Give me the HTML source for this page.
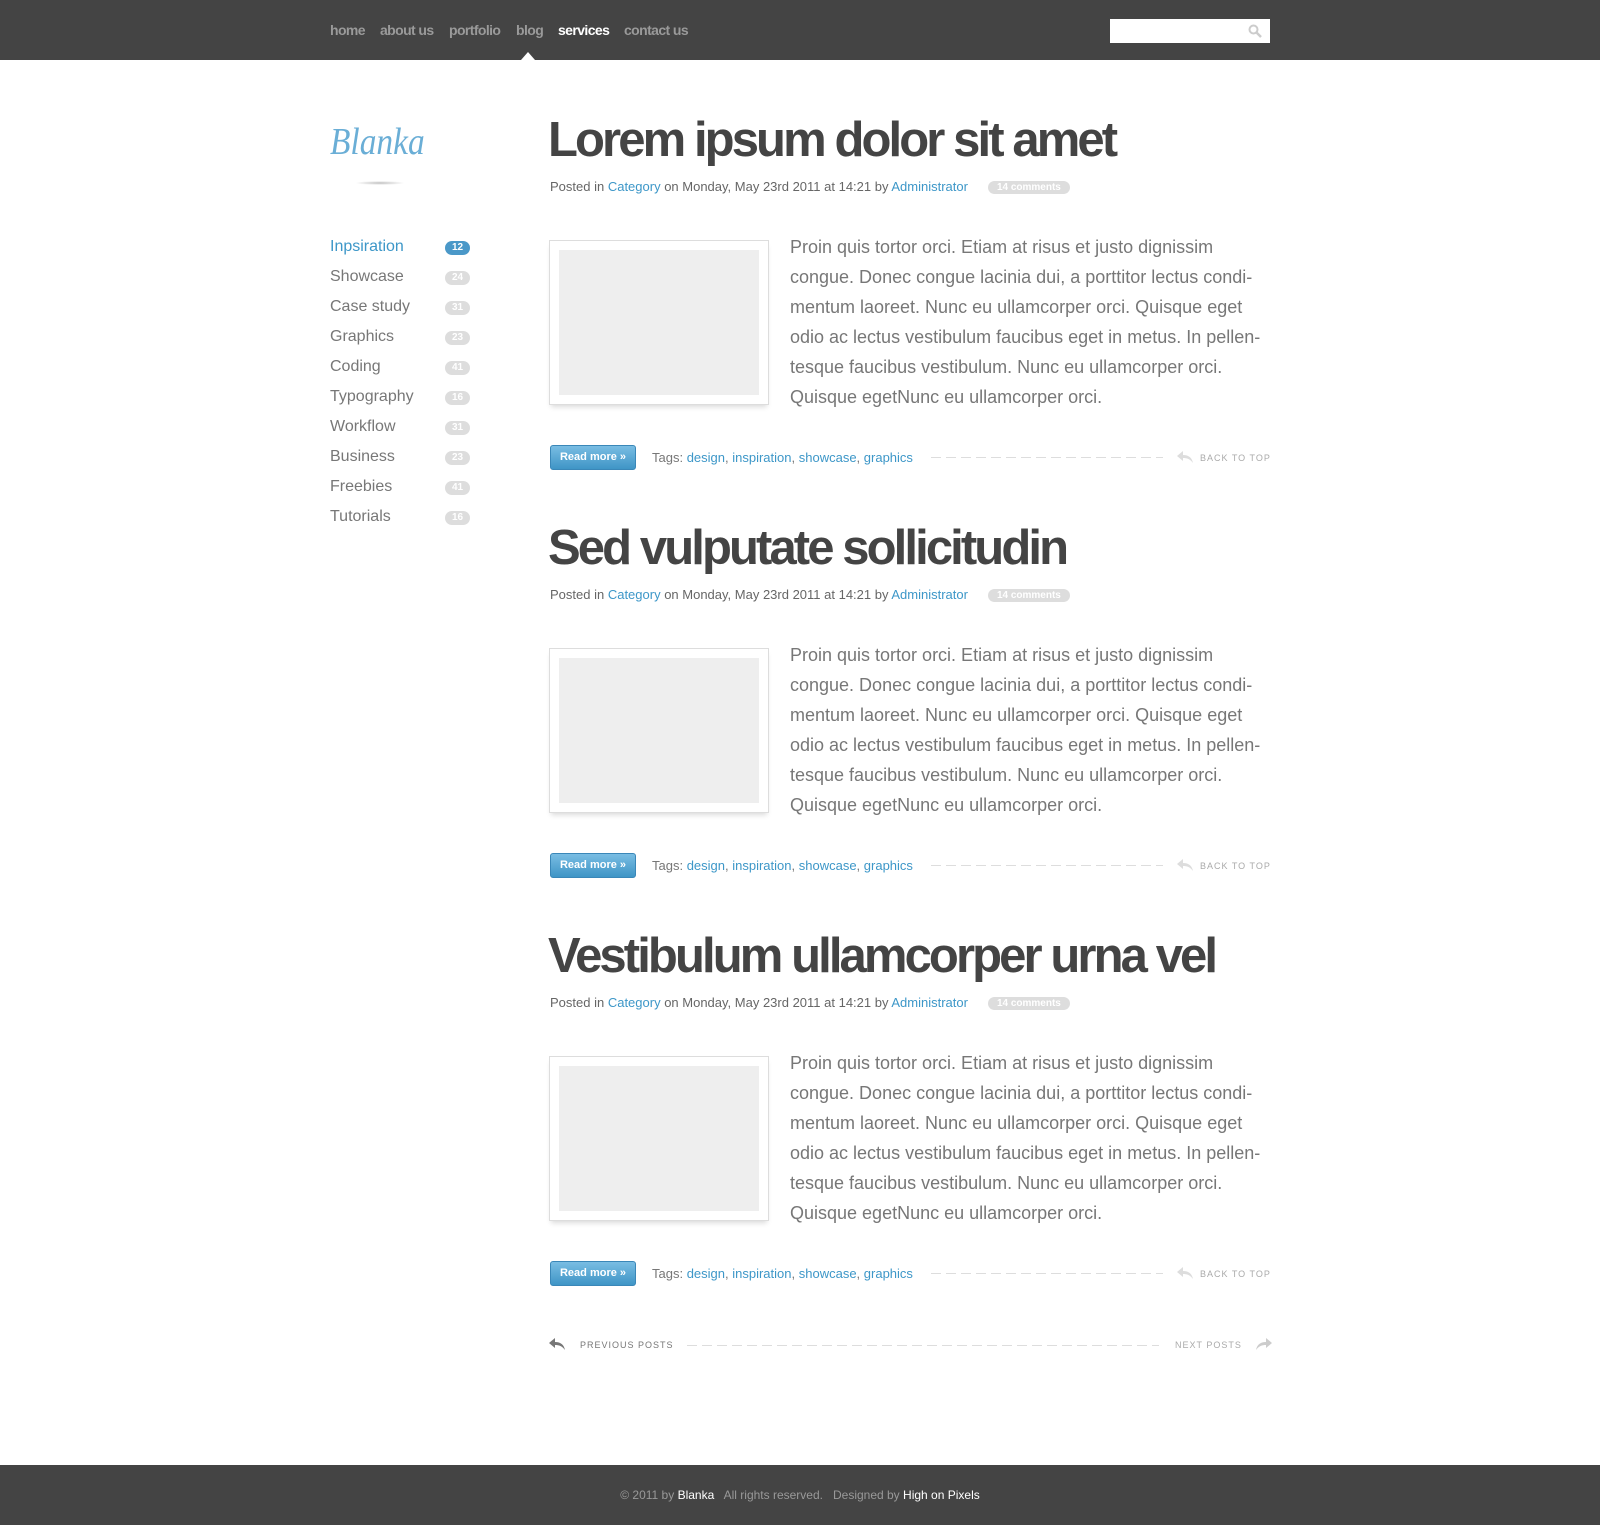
<!DOCTYPE html>
<html><head><meta charset="utf-8"><style>
*{margin:0;padding:0;box-sizing:border-box}
body{width:1600px;height:1525px;background:#fff;font-family:"Liberation Sans",Arial,sans-serif;position:relative;overflow:hidden}
.abs{position:absolute}
#nav{left:0;top:0;width:1600px;height:60px;background:#444}
#nav a{position:absolute;top:22px;font-size:14px;font-weight:bold;color:#9a9a9a;text-decoration:none;letter-spacing:-0.6px}
#tri{left:521px;top:52px;width:0;height:0;border-left:7px solid transparent;border-right:7px solid transparent;border-bottom:8px solid #fff}
#search{left:1110px;top:19px;width:160px;height:24px;background:#fff}
.logo{left:330px;top:120px;font-family:"Liberation Serif",serif;font-style:italic;font-size:38px;color:#6aaed6;font-weight:normal;transform:scaleX(0.88);transform-origin:left}
.side{left:330px;font-size:16px;color:#777}
.badge{left:445px;width:25px;height:14px;border-radius:7px;background:#ddd;color:#fff;font-size:10px;font-weight:bold;text-align:center;line-height:14px}
.title{left:548px;font-size:49px;font-weight:bold;color:#444;letter-spacing:-2.9px;white-space:nowrap}
.meta{left:550px;font-size:13px;color:#666;white-space:nowrap}
.meta a,.tags a{color:#3d97c8;text-decoration:none}
.cm{display:inline-block;margin-left:20px;background:#ddd;color:#fff;border-radius:7px;font-size:10px;font-weight:bold;padding:1px 9px;vertical-align:1px}
.img{left:549px;width:220px;height:165px;border:1px solid #ddd;background:#fff;box-shadow:0 4px 5px -2px rgba(0,0,0,.15)}
.img div{position:absolute;left:9px;top:9px;width:200px;height:145px;background:#eee}
.txt{left:790px;width:490px;font-size:18px;line-height:30px;color:#777}
.btn{left:550px;width:86px;height:25px;border-radius:3px;background:linear-gradient(#79bde3,#3f95c6);border:1px solid #3a87b8;color:#fff;font-size:11px;font-weight:bold;text-align:center;line-height:23px}
.tags{left:652px;font-size:13px;color:#777;white-space:nowrap}
.dash{height:1px;background:repeating-linear-gradient(90deg,#ddd 0 10px,transparent 10px 15px)}
.btt{left:1200px;font-size:9px;color:#aaa;letter-spacing:1px}
#foot{left:0;top:1465px;width:1600px;height:60px;background:#444;color:#999;font-size:12px;text-align:center;line-height:60px}
#foot b{color:#fff;font-weight:normal}
</style></head><body>
<div id="nav" class="abs">
<a style="left:330px">home</a><a style="left:380px">about us</a><a style="left:449px">portfolio</a><a style="left:516px">blog</a><a style="left:558px;color:#fff">services</a><a style="left:624px">contact us</a>
</div>
<div id="tri" class="abs"></div>
<div id="search" class="abs"><svg style="position:absolute;right:8px;top:5px" width="14" height="14" viewBox="0 0 14 14"><circle cx="5.5" cy="5.5" r="4" stroke="#ccc" stroke-width="2" fill="none"/><path d="M8.5 8.5L13 13" stroke="#ccc" stroke-width="2.5"/></svg></div>
<div class="abs logo">Blanka</div>
<div class="abs" style="left:355px;top:181px;width:50px;height:4px;border-radius:50%;background:radial-gradient(rgba(0,0,0,.25),transparent 70%)"></div>

<div class="abs side" style="top:238px;color:#3d97c8">Inpsiration</div><div class="abs badge" style="top:241px;background:#4a98c8">12</div>
<div class="abs side" style="top:268px">Showcase</div><div class="abs badge" style="top:271px">24</div>
<div class="abs side" style="top:298px">Case study</div><div class="abs badge" style="top:301px">31</div>
<div class="abs side" style="top:328px">Graphics</div><div class="abs badge" style="top:331px">23</div>
<div class="abs side" style="top:358px">Coding</div><div class="abs badge" style="top:361px">41</div>
<div class="abs side" style="top:388px">Typography</div><div class="abs badge" style="top:391px">16</div>
<div class="abs side" style="top:418px">Workflow</div><div class="abs badge" style="top:421px">31</div>
<div class="abs side" style="top:448px">Business</div><div class="abs badge" style="top:451px">23</div>
<div class="abs side" style="top:478px">Freebies</div><div class="abs badge" style="top:481px">41</div>
<div class="abs side" style="top:508px">Tutorials</div><div class="abs badge" style="top:511px">16</div>

<div class="abs title" style="top:112px">Lorem ipsum dolor sit amet</div>
<div class="abs meta" style="top:179px">Posted in <a>Category</a> on Monday, May 23rd 2011 at 14:21 by <a>Administrator</a><span class="cm">14 comments</span></div>
<div class="abs img" style="top:240px"><div></div></div>
<div class="abs txt" style="top:232px">Proin quis tortor orci. Etiam at risus et justo dignissim congue. Donec congue lacinia dui, a porttitor lectus condi-mentum laoreet. Nunc eu ullamcorper orci. Quisque eget odio ac lectus vestibulum faucibus eget in metus. In pellen-tesque faucibus vestibulum. Nunc eu ullamcorper orci. Quisque egetNunc eu ullamcorper orci.</div>
<div class="abs btn" style="top:445px">Read more »</div>
<div class="abs tags" style="top:450px">Tags: <a>design</a>, <a>inspiration</a>, <a>showcase</a>, <a>graphics</a></div>
<div class="abs dash" style="left:931px;top:457px;width:232px"></div>
<div class="abs btt" style="top:453px">BACK TO TOP</div>
<svg class="abs" style="left:1177px;top:451px" width="16" height="12" viewBox="0 0 16 12"><path d="M6 0L0 5l6 5V7c4 0 7 1 10 5-1-5-4-8-10-8z" fill="#ddd"/></svg>

<div class="abs title" style="top:520px">Sed vulputate sollicitudin</div>
<div class="abs meta" style="top:587px">Posted in <a>Category</a> on Monday, May 23rd 2011 at 14:21 by <a>Administrator</a><span class="cm">14 comments</span></div>
<div class="abs img" style="top:648px"><div></div></div>
<div class="abs txt" style="top:640px">Proin quis tortor orci. Etiam at risus et justo dignissim congue. Donec congue lacinia dui, a porttitor lectus condi-mentum laoreet. Nunc eu ullamcorper orci. Quisque eget odio ac lectus vestibulum faucibus eget in metus. In pellen-tesque faucibus vestibulum. Nunc eu ullamcorper orci. Quisque egetNunc eu ullamcorper orci.</div>
<div class="abs btn" style="top:853px">Read more »</div>
<div class="abs tags" style="top:858px">Tags: <a>design</a>, <a>inspiration</a>, <a>showcase</a>, <a>graphics</a></div>
<div class="abs dash" style="left:931px;top:865px;width:232px"></div>
<div class="abs btt" style="top:861px">BACK TO TOP</div>
<svg class="abs" style="left:1177px;top:859px" width="16" height="12" viewBox="0 0 16 12"><path d="M6 0L0 5l6 5V7c4 0 7 1 10 5-1-5-4-8-10-8z" fill="#ddd"/></svg>

<div class="abs title" style="top:928px">Vestibulum ullamcorper urna vel</div>
<div class="abs meta" style="top:995px">Posted in <a>Category</a> on Monday, May 23rd 2011 at 14:21 by <a>Administrator</a><span class="cm">14 comments</span></div>
<div class="abs img" style="top:1056px"><div></div></div>
<div class="abs txt" style="top:1048px">Proin quis tortor orci. Etiam at risus et justo dignissim congue. Donec congue lacinia dui, a porttitor lectus condi-mentum laoreet. Nunc eu ullamcorper orci. Quisque eget odio ac lectus vestibulum faucibus eget in metus. In pellen-tesque faucibus vestibulum. Nunc eu ullamcorper orci. Quisque egetNunc eu ullamcorper orci.</div>
<div class="abs btn" style="top:1261px">Read more »</div>
<div class="abs tags" style="top:1266px">Tags: <a>design</a>, <a>inspiration</a>, <a>showcase</a>, <a>graphics</a></div>
<div class="abs dash" style="left:931px;top:1273px;width:232px"></div>
<div class="abs btt" style="top:1269px">BACK TO TOP</div>
<svg class="abs" style="left:1177px;top:1267px" width="16" height="12" viewBox="0 0 16 12"><path d="M6 0L0 5l6 5V7c4 0 7 1 10 5-1-5-4-8-10-8z" fill="#ddd"/></svg>

<svg class="abs" style="left:549px;top:1338px" width="16" height="12" viewBox="0 0 16 12"><path d="M6 0L0 5l6 5V7c4 0 7 1 10 5-1-5-4-8-10-8z" fill="#777"/></svg>
<div class="abs btt" style="left:580px;top:1340px;color:#777">PREVIOUS POSTS</div>
<div class="abs dash" style="left:687px;top:1345px;width:472px"></div>
<div class="abs btt" style="left:1175px;top:1340px">NEXT POSTS</div>
<svg class="abs" style="left:1256px;top:1338px" width="16" height="12" viewBox="0 0 16 12"><path d="M10 0l6 5-6 5V7C6 7 3 8 0 12 1 7 4 4 10 4z" fill="#ccc"/></svg>

<div id="foot" class="abs">© 2011 by <b>Blanka</b> &nbsp; All rights reserved. &nbsp; Designed by <b>High on Pixels</b></div>
</body></html>
